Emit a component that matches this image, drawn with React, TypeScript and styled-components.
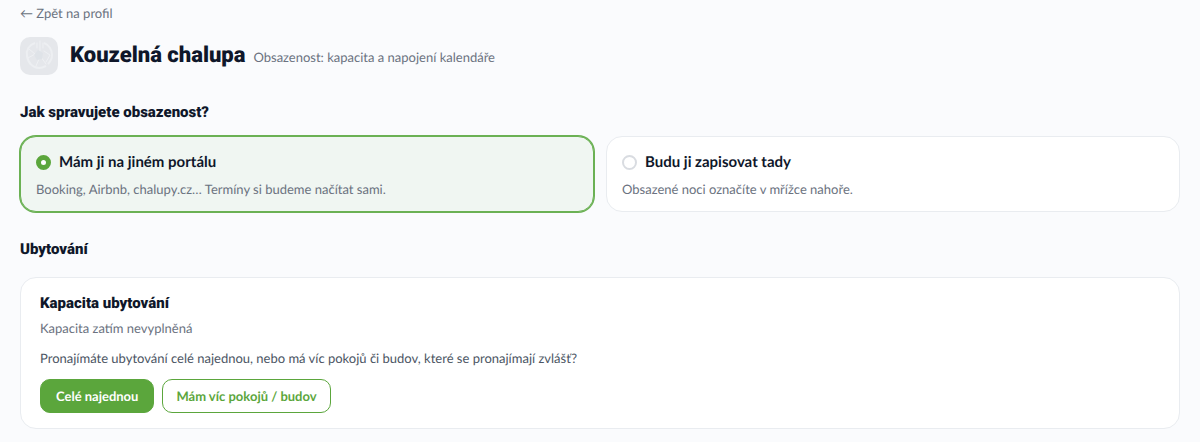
import React, { useState } from "react";
import styled, { createGlobalStyle } from "styled-components";

const GlobalStyle = createGlobalStyle`
  *, *::before, *::after { box-sizing: border-box; }
  body {
    margin: 0;
    background: #fafbfd;
    color: #0f172a;
    font-family: Lato, "Liberation Sans", sans-serif;
    font-size: 13px;
    line-height: 20px;
    text-rendering: geometricPrecision;
  }
  h1, h2, h3, p { margin: 0; }
  h1, h2, h3 { font-family: Roboto, Lato, sans-serif; font-weight: 900; }
`;

const Page = styled.main`
  padding: 3px 20px 12px;
`;

const BackLink = styled.a`
  display: inline-block;
  color: #6b7280;
  text-decoration: none;
`;

const Header = styled.header`
  display: flex;
  align-items: center;
  gap: 12px;
  margin-top: 14px;
`;

const Avatar = styled.span`
  display: flex;
  flex: none;
  width: 38px;
  height: 38px;
  border-radius: 10px;
  background: #e5e7eb;
  overflow: hidden;
`;

const TitleRow = styled.div`
  display: flex;
  flex-wrap: wrap;
  align-items: baseline;
  column-gap: 8px;
`;

const Title = styled.h1`
  font-size: 22px;
  line-height: 32px;
`;

const Muted = styled.p`
  color: #6b7280;
`;

const Section = styled.section`
  margin-top: 27px;
`;

const SectionTitle = styled.h2<{ $spacious?: boolean }>`
  margin-bottom: ${(p) => (p.$spacious ? 18 : 14)}px;
  font-size: 15px;
  line-height: 20px;
`;

const Options = styled.div`
  display: grid;
  grid-template-columns: 1fr 1fr;
  gap: 12px;
`;

const Option = styled.label<{ $selected: boolean }>`
  display: flex;
  flex-direction: column;
  gap: 7px;
  padding: 15px 15px 12px;
  border: 1px solid ${(p) => (p.$selected ? "#6bb154" : "#e9ecf0")};
  border-radius: 16px;
  background: ${(p) => (p.$selected ? "#f0f6f2" : "#ffffff")};
  box-shadow: ${(p) => (p.$selected ? "0 0 0 1px #6bb154" : "none")};
  cursor: pointer;
`;

const OptionHead = styled.span`
  display: flex;
  align-items: center;
  gap: 8px;
  font-size: 15px;
  font-weight: 700;
`;

const Radio = styled.input`
  appearance: none;
  flex: none;
  width: 15px;
  height: 15px;
  margin: 0;
  border: 2px solid #d9dce1;
  border-radius: 50%;
  background: #ffffff;

  &:checked {
    border: 5px solid #5ba63c;
  }
`;

const OptionText = styled.span`
  color: #6b7280;
`;

const Card = styled.div`
  padding: 15px 19px;
  border: 1px solid #e9ecf0;
  border-radius: 16px;
  background: #ffffff;
`;

const CardTitle = styled.h3`
  font-size: 15px;
  line-height: 20px;
  margin-bottom: 5px;
`;

const Question = styled.p`
  margin-top: 10px;
  color: #4b5563;
`;

const Actions = styled.div`
  display: flex;
  flex-wrap: wrap;
  gap: 8px;
  margin-top: 11px;
`;

const Button = styled.button<{ $primary?: boolean }>`
  padding: 6px ${(p) => (p.$primary ? 15 : 13)}px;
  border: 1px solid #5ba63c;
  border-radius: 10px;
  background: ${(p) => (p.$primary ? "#5ba63c" : "#ffffff")};
  color: ${(p) => (p.$primary ? "#ffffff" : "#5ba63c")};
  font: inherit;
  font-weight: 700;
  text-rendering: inherit;
  cursor: pointer;
`;

const MODES = [
  {
    id: "portal",
    title: "Mám ji na jiném portálu",
    text: "Booking, Airbnb, chalupy.cz… Termíny si budeme načítat sami.",
  },
  {
    id: "manual",
    title: "Budu ji zapisovat tady",
    text: "Obsazené noci označíte v mřížce nahoře.",
  },
];

function Emblem() {
  return (
    <svg width="38" height="38" viewBox="0 0 38 38" fill="none" aria-hidden="true">
      <path
        d="M15 6C9 8 6 13 7 19c1 7 6 12 12 12 3 0 5-1 7-2M24 6c5 2 8 7 8 12 0 4-2 7-4 9"
        stroke="#edeff2"
        strokeWidth="2"
      />
      <g stroke="#eef0f3" strokeWidth="1" strokeLinecap="round">
        <path d="M20 4v10M17 6v5M23 6v5" />
        <path d="M9 12l6 5-7 4M15 19l4 3-3 7M21 20l5 7M24 14l6 4-4 7" />
      </g>
      <path d="M18 13l5 3-1 6-5 1-3-5z" fill="#dfe3e8" />
    </svg>
  );
}

export default function App() {
  const [mode, setMode] = useState("portal");

  return (
    <>
      <GlobalStyle />
      <Page>
        <BackLink href="#profil">← Zpět na profil</BackLink>
        <Header>
          <Avatar>
            <Emblem />
          </Avatar>
          <TitleRow>
            <Title>Kouzelná chalupa</Title>
            <Muted>Obsazenost: kapacita a napojení kalendáře</Muted>
          </TitleRow>
        </Header>

        <Section>
          <SectionTitle id="mode-title">Jak spravujete obsazenost?</SectionTitle>
          <Options role="radiogroup" aria-labelledby="mode-title">
            {MODES.map((m) => (
              <Option key={m.id} $selected={mode === m.id}>
                <OptionHead>
                  <Radio
                    type="radio"
                    name="mode"
                    value={m.id}
                    checked={mode === m.id}
                    onChange={() => setMode(m.id)}
                  />
                  {m.title}
                </OptionHead>
                <OptionText>{m.text}</OptionText>
              </Option>
            ))}
          </Options>
        </Section>

        <Section>
          <SectionTitle $spacious>Ubytování</SectionTitle>
          <Card>
            <CardTitle>Kapacita ubytování</CardTitle>
            <Muted>Kapacita zatím nevyplněná</Muted>
            <Question>
              Pronajímáte ubytování celé najednou, nebo má víc pokojů či budov, které se pronajímají zvlášť?
            </Question>
            <Actions>
              <Button type="button" $primary>
                Celé najednou
              </Button>
              <Button type="button">Mám víc pokojů / budov</Button>
            </Actions>
          </Card>
        </Section>
      </Page>
    </>
  );
}
